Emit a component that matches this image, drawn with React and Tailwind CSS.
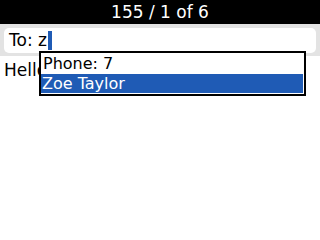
export default function App() {
  const font = { fontFamily: '"DejaVu Sans", sans-serif' };

  return (
    <div className="relative w-[320px] h-[240px] bg-white overflow-hidden" style={font}>
      {/* Title bar */}
      <div className="h-[24px] bg-black text-white text-[17px] leading-[24px] text-center">
        155 / 1 of 6
      </div>

      {/* To field */}
      <div className="bg-[#e3e3e3] px-[4px] pt-[4px] pb-[3px]">
        <div className="h-[25px] bg-white rounded-[5px] flex items-center pl-[5px] text-[17px] text-black">
          <span>To: z</span>
          <span className="ml-[1px] w-[4px] h-[19px] bg-[#1f5bb5]"></span>
        </div>
      </div>

      {/* Message body */}
      <div className="px-[4px] pt-[3px] text-[17px] text-black leading-[22px]">Hello</div>

      {/* Autocomplete dropdown */}
      <div className="absolute left-[39px] top-[51px] w-[267px] h-[45px] bg-white border-2 border-black pr-[1px] text-[16px] leading-[20px]">
        <div className="h-[21px] pl-[2px] pt-[1px] text-black">Phone: 7</div>
        <div className="h-[19px] bg-[#1f5bb5] text-white pl-[1px] leading-[19px]">Zoe Taylor</div>
      </div>
    </div>
  );
}
